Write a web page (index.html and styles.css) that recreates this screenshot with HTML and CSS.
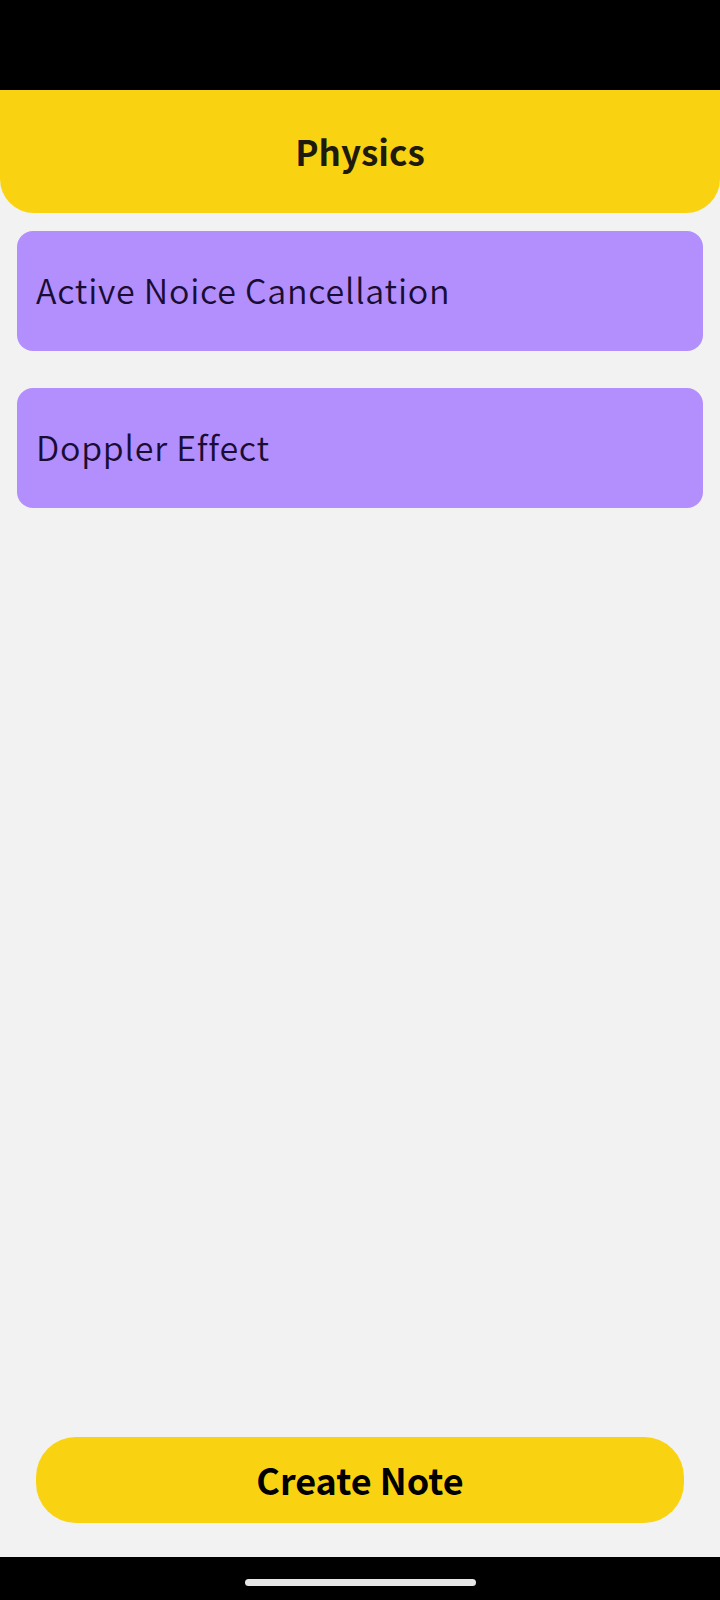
FILE: index.html
```html
<!DOCTYPE html>
<html lang="en">
<head>
<meta charset="utf-8">
<title>Physics</title>
<link rel="stylesheet" href="styles.css">
</head>
<body>
<div class="screen">
  <div class="status-bar"></div>
  <header class="app-header">
    <h1 class="title">Physics</h1>
  </header>
  <main class="note-list">
    <div class="note-card">Active Noice Cancellation</div>
    <div class="note-card">Doppler Effect</div>
  </main>
  <div class="actions">
    <button class="create-btn">Create Note</button>
  </div>
  <div class="nav-bar"><span class="home-indicator"></span></div>
</div>
</body>
</html>
```
FILE: styles.css
```css
html, body {
  margin: 0;
  padding: 0;
  background: #f2f2f2;
}
.screen {
  width: 720px;
  height: 1600px;
  display: flex;
  flex-direction: column;
  background: #f2f2f2;
  font-family: "Noto Sans CJK JP", "Noto Sans", sans-serif;
}
.status-bar {
  height: 90px;
  background: #000;
  flex: none;
}
.app-header {
  height: 123px;
  flex: none;
  background: #f9d312;
  border-radius: 0 0 34px 34px;
  display: flex;
  align-items: center;
  justify-content: center;
}
.title {
  margin: 0;
  font-size: 35px;
  font-weight: 700;
  color: #1e1a0c;
  padding-bottom: 2px;
}
.note-list {
  flex: 1;
  display: flex;
  flex-direction: column;
  gap: 37px;
  padding: 18px 17px 0 17px;
}
.note-card {
  height: 120px;
  box-sizing: border-box;
  background: #b38ffe;
  border-radius: 16px;
  display: flex;
  align-items: center;
  padding: 0 0 4px 19px;
  font-size: 34px;
  font-weight: 350;
  letter-spacing: 0.75px;
  color: #1a0d33;
}
.actions {
  flex: none;
  padding: 0 36px 34px 36px;
}
.create-btn {
  display: block;
  width: 100%;
  height: 86px;
  border: none;
  border-radius: 40px;
  background: #f9d312;
  font-family: "Noto Sans CJK JP", "Noto Sans", sans-serif;
  font-size: 36px;
  font-weight: 700;
  color: #000;
  padding: 0 0 2px 0;
}
.nav-bar {
  height: 43px;
  flex: none;
  background: #000;
  display: flex;
  justify-content: center;
  padding-top: 22px;
  box-sizing: border-box;
}
.home-indicator {
  width: 231px;
  height: 7px;
  border-radius: 4px;
  background: #e6e6e6;
}
```
